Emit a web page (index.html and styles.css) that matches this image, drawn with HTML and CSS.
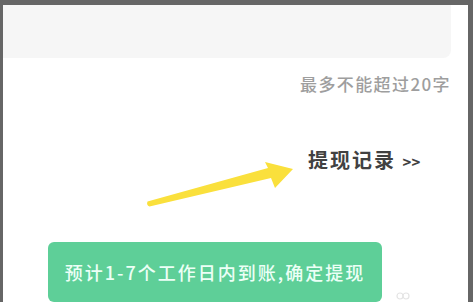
FILE: index.html
```html
<!DOCTYPE html>
<html lang="zh">
<head>
<meta charset="utf-8">
<link rel="stylesheet" href="styles.css">
</head>
<body>
<div class="frame">
  <div class="inputbox"></div>
  <div class="hint">最多不能超过20字</div>
  <div class="record">提现记录 <span class="gt">&gt;&gt;</span></div>
  <svg class="arrow" width="160" height="50" viewBox="140 160 160 50">
    <path d="M147.5 201.5 L268 168 L265 162 L293 169 L275 188 L271 178 L149.5 206.5 Q146 205 147.5 201.5 Z" fill="#fae03c"/>
  </svg>
  <div class="btn">预计1-7个工作日内到账,确定提现</div>
  <svg class="mark" width="18" height="10" viewBox="0 0 18 10">
    <circle cx="5" cy="6" r="3" fill="none" stroke="#e4e4e4" stroke-width="1.2"/>
    <circle cx="11" cy="6" r="3" fill="none" stroke="#e4e4e4" stroke-width="1.2"/>
  </svg>
</div>
</body>
</html>
```
FILE: styles.css
```css
html, body {
  margin: 0;
  padding: 0;
  background: #ffffff;
}
.frame {
  position: relative;
  box-sizing: border-box;
  width: 473px;
  height: 302px;
  border-top: 5px solid #666666;
  border-left: 3px solid #666666;
  border-right: 5px solid #666666;
  background: #ffffff;
  overflow: hidden;
  font-family: "Noto Sans CJK SC", "Noto Sans", sans-serif;
}
.inputbox {
  height: 53px;
  margin-right: 17px;
  background: #f6f6f6;
  border-radius: 0 0 8px 0;
}
.hint {
  margin-top: 16px;
  padding-right: 17px;
  text-align: right;
  font-size: 17px;
  line-height: 20px;
  letter-spacing: 1.4px;
  font-weight: 500;
  color: #9e9e9e;
}
.record {
  margin-top: 54px;
  padding-left: 305px;
  font-size: 20px;
  line-height: 24px;
  letter-spacing: 2px;
  font-weight: bold;
  color: #414141;
}
.gt {
  font-size: 15px;
  letter-spacing: 0;
}
.arrow {
  position: absolute;
  left: 137px;
  top: 155px;
}
.btn {
  margin-top: 68px;
  margin-left: 45px;
  width: 334px;
  height: 60px;
  border-radius: 6px;
  background: #5ecf98;
  color: #ecfff6;
  font-size: 18px;
  letter-spacing: 2px;
  font-weight: 500;
  display: flex;
  align-items: center;
  justify-content: center;
}
.mark {
  position: absolute;
  left: 392px;
  top: 285px;
}
```
